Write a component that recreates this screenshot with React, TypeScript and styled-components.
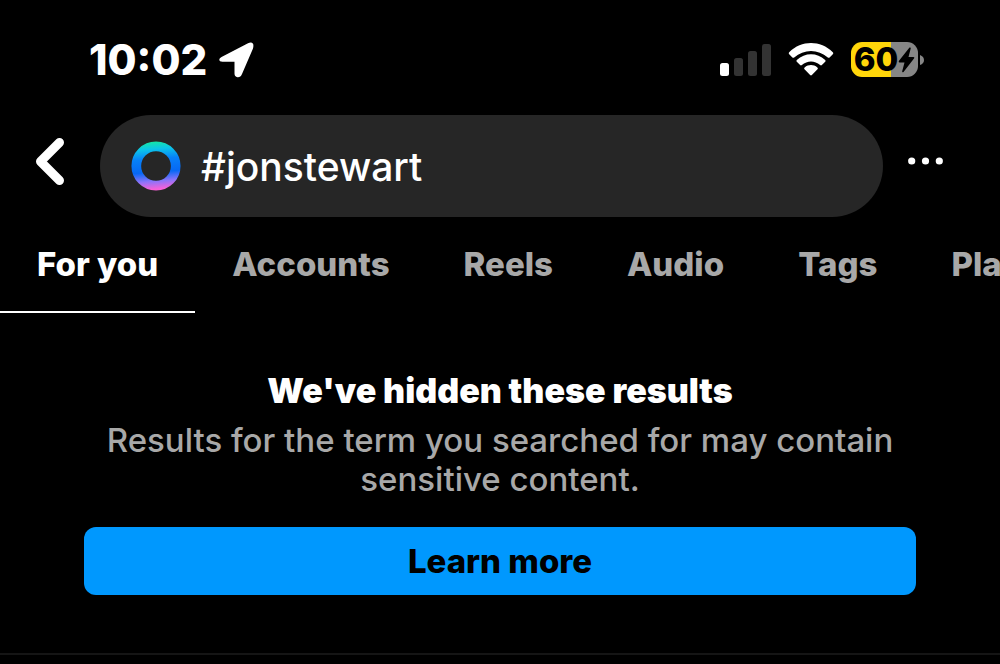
import React from 'react';
import styled, { createGlobalStyle } from 'styled-components';

const GlobalStyle = createGlobalStyle`
  *, *::before, *::after { box-sizing: border-box; }
  body {
    margin: 0;
    background: #000;
    color: #fff;
    font-family: Inter, "Liberation Sans", sans-serif;
    overflow-x: hidden;
  }
  button, input { font: inherit; color: inherit; border: 0; background: none; padding: 0; margin: 0; }
  svg { display: block; flex: none; }
`;

const Screen = styled.main`
  display: flex;
  flex-direction: column;
  min-height: 100vh;
`;

const StatusBar = styled.header`
  display: flex;
  align-items: center;
  justify-content: space-between;
  padding: 36px 76px 32px 89px;
`;

const StatusGroup = styled.div<{ $gap: number }>`
  display: flex;
  align-items: center;
  gap: ${({ $gap }) => $gap}px;
`;

const Time = styled.time`
  font-size: 42px;
  line-height: 47px;
  font-weight: 800;
`;

const Battery = styled.div`
  display: flex;
  align-items: center;
  gap: 1px;
`;

const BatteryBody = styled.div`
  display: flex;
  align-items: center;
  justify-content: center;
  width: 67px;
  height: 35px;
  border-radius: 11px;
  background: linear-gradient(90deg, #ffd60a 0 60%, #868686 60%);
  color: #000;
  font-size: 33px;
  line-height: 35px;
  font-weight: 800;
`;

const SearchRow = styled.form`
  display: flex;
  align-items: center;
  padding: 0 52px 0 33px;
`;

const IconButton = styled.button`
  display: flex;
  flex: none;
  padding-bottom: 10px;
  cursor: pointer;
`;

const SearchPill = styled.label`
  display: flex;
  flex: 1;
  align-items: center;
  gap: 20px;
  min-width: 0;
  height: 102px;
  margin: 0 24px 0 35px;
  padding: 0 32px 0 31px;
  border-radius: 51px;
  background: #262626;
`;

const SearchInput = styled.input`
  flex: 1;
  min-width: 0;
  height: 48px;
  font-size: 39px;
  font-weight: 500;
  outline: 0;
`;

const Tabs = styled.nav`
  display: flex;
  overflow: hidden;
`;

const Tab = styled.button<{ $active?: boolean }>`
  flex: none;
  height: 96px;
  padding: 0 37px;
  border-bottom: 2px solid ${({ $active }) => ($active ? '#fff' : 'transparent')};
  color: ${({ $active }) => ($active ? '#fff' : '#a8a8a8')};
  font-size: 33px;
  line-height: 40px;
  font-weight: 800;
  cursor: pointer;
`;

const Notice = styled.section`
  padding: 58px 84px;
  border-bottom: 2px solid #151515;
  text-align: center;
`;

const Title = styled.h1`
  margin: 0 0 10px;
  font-size: 34px;
  line-height: 40px;
  font-weight: 900;
`;

const Description = styled.p`
  margin: 0 0 28px;
  color: #a8a8a8;
  font-size: 33px;
  line-height: 39px;
  font-weight: 500;
`;

const PrimaryButton = styled.button`
  width: 100%;
  height: 68px;
  border-radius: 12px;
  background: #0098fe;
  color: #000;
  font-size: 33px;
  font-weight: 800;
  cursor: pointer;
`;

const LocationIcon = () => (
  <svg width="35" height="36" viewBox="0 0 35 36" aria-hidden="true">
    <path d="M2.500 15 29 1.300Q32.500-.3 34 1.800 34.800 3.300 34 6.500L23 32Q21.500 35.500 18.500 35.200 15.500 34.800 15.500 31.500V19.700H3.500Q.3 19.700.3 17.500.3 16.200 2.500 15Z" fill="#fff" />
  </svg>
);

const SignalIcon = () => (
  <svg width="51" height="34" viewBox="0 0 51 34" aria-hidden="true">
    <g transform="translate(0 -1)">
      <rect x="0" y="21" width="9" height="13" rx="2.500" fill="#fff" />
      <g fill="#333">
        <rect x="14" y="16" width="9" height="18" rx="2.500" />
        <rect x="28" y="9" width="9" height="25" rx="2.500" />
        <rect x="42" y="2" width="9" height="32" rx="2.500" />
      </g>
    </g>
  </svg>
);

const WifiIcon = () => (
  <svg width="46" height="34" viewBox="0 0 46 34" aria-hidden="true">
    <g fill="#fff" transform="translate(0 -1)">
      <path d="M1.200 10.300C13.500-2 32.500-2 44.800 10.300q.9 1 0 1.900l-3.200 3.200q-.9.800-1.800 0C30.300 6.700 15.700 6.700 6.200 15.400q-.9.800-1.800 0L1.200 12.200q-.9-.9 0-1.900Z" />
      <path d="M8.800 18C17 10.200 29 10.200 37.200 18q.9.900 0 1.800L33.900 23q-.9.800-1.800 0C26.800 18.300 19.200 18.300 13.900 23q-.9.800-1.800 0L8.800 19.800q-.9-.9 0-1.800Z" />
      <path d="M16.600 25.500c4-3.200 8.800-3.200 12.800 0q1 .9.100 1.800l-5.600 5.800q-.9.800-1.800 0l-5.600-5.800q-.9-.9.100-1.800Z" />
    </g>
  </svg>
);

const BoltIcon = () => (
  <svg width="17" height="26" viewBox="0 0 17 26" aria-hidden="true">
    <path d="M11.500.5Q13 0 12.700 1.500L10.500 10H15.500Q17 10.300 16 11.600L5.500 25Q4 26 4.200 24.200L6.500 15.500H1.500Q0 15.200 1 13.800Z" fill="#000" />
  </svg>
);

const BatteryCap = () => (
  <svg width="5" height="12" viewBox="0 0 5 12" aria-hidden="true">
    <path d="M1 1Q5 2.500 5 6T1 11Z" fill="#868686" />
  </svg>
);

const BackIcon = () => (
  <svg width="32" height="48" viewBox="0 0 32 48" fill="none" stroke="#fff" strokeWidth="9" strokeLinecap="round" strokeLinejoin="round" aria-hidden="true">
    <path d="M26.500 5.500 7.500 24.500l19 19" />
  </svg>
);

const AssistantIcon = () => (
  <svg width="50" height="50" viewBox="0 0 50 50" fill="none" aria-hidden="true">
    <defs>
      <linearGradient id="ring" x1="23" y1="0" x2="27" y2="50" gradientUnits="userSpaceOnUse">
        <stop offset="0" stopColor="#15e8a0" />
        <stop offset=".16" stopColor="#0cc4ea" />
        <stop offset=".36" stopColor="#0780f8" />
        <stop offset=".62" stopColor="#0668f4" />
        <stop offset=".8" stopColor="#8c74fa" />
        <stop offset=".96" stopColor="#f860d8" />
      </linearGradient>
    </defs>
    <circle cx="25" cy="25" r="19.700" stroke="url(#ring)" strokeWidth="9.700" />
  </svg>
);

const MoreIcon = () => (
  <svg width="41" height="10" viewBox="0 0 41 10" fill="#fff" aria-hidden="true">
    <circle cx="4.700" cy="5" r="3.600" />
    <circle cx="18.500" cy="5" r="3.600" />
    <circle cx="32.300" cy="5" r="3.600" />
  </svg>
);

const tabs = ['For you', 'Accounts', 'Reels', 'Audio', 'Tags', 'Places'];

export default function App() {
  return (
    <>
      <GlobalStyle />
      <Screen>
        <StatusBar>
          <StatusGroup $gap={12}>
            <Time>10:02</Time>
            <LocationIcon />
          </StatusGroup>
          <StatusGroup $gap={17}>
            <SignalIcon />
            <WifiIcon />
            <Battery>
              <BatteryBody>
                60
                <BoltIcon />
              </BatteryBody>
              <BatteryCap />
            </Battery>
          </StatusGroup>
        </StatusBar>
        <SearchRow onSubmit={(event) => event.preventDefault()}>
          <IconButton type="button" aria-label="Back">
            <BackIcon />
          </IconButton>
          <SearchPill>
            <AssistantIcon />
            <SearchInput type="text" aria-label="Search" defaultValue="#jonstewart" />
          </SearchPill>
          <IconButton type="button" aria-label="More options">
            <MoreIcon />
          </IconButton>
        </SearchRow>
        <Tabs aria-label="Result types">
          {tabs.map((name, index) => (
            <Tab key={name} type="button" $active={index === 0}>
              {name}
            </Tab>
          ))}
        </Tabs>
        <Notice>
          <Title>We've hidden these results</Title>
          <Description>Results for the term you searched for may contain sensitive content.</Description>
          <PrimaryButton type="button">Learn more</PrimaryButton>
        </Notice>
      </Screen>
    </>
  );
}
